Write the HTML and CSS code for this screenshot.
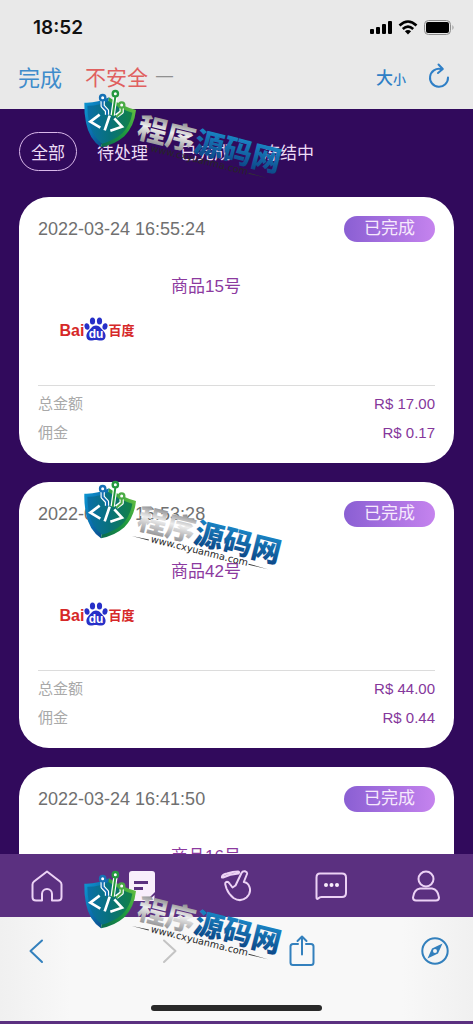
FILE: index.html
```html
<!DOCTYPE html>
<html lang="zh">
<head>
    <meta charset="UTF-8">
    <meta name="viewport" content="width=device-width, initial-scale=1.0">
    <title>订单记录</title>
    <link rel="stylesheet" href="styles.css">
</head>
<body>
    <!-- 公用图形 -->
    <svg class="defs" aria-hidden="true">
        <defs>
            <linearGradient id="shield-left" x1="0" y1="0" x2="1" y2="1">
                <stop offset="0" stop-color="#0d9bd6"/>
                <stop offset="0.5" stop-color="#0b6fae"/>
                <stop offset="1" stop-color="#0c3f80"/>
            </linearGradient>
            <linearGradient id="shield-right" x1="1" y1="0" x2="0" y2="1">
                <stop offset="0" stop-color="#7ac943"/>
                <stop offset="0.5" stop-color="#1f9a3f"/>
                <stop offset="1" stop-color="#0a6a50"/>
            </linearGradient>
            <linearGradient id="shield-core" x1="0" y1="0" x2="1" y2="0">
                <stop offset="0" stop-color="#0a6fa8"/>
                <stop offset="0.5" stop-color="#08717a"/>
                <stop offset="1" stop-color="#128246"/>
            </linearGradient>
            <linearGradient id="silver" x1="0" y1="0" x2="0" y2="1">
                <stop offset="0.2" stop-color="#8c8c8e"/>
                <stop offset="0.5" stop-color="#ededed"/>
                <stop offset="0.9" stop-color="#8f8f92"/>
            </linearGradient>
            <linearGradient id="blue" x1="0" y1="0" x2="0" y2="1">
                <stop offset="0.2" stop-color="#1a86c6"/>
                <stop offset="0.9" stop-color="#0c4686"/>
            </linearGradient>
        </defs>
        <symbol id="brand" viewBox="0 0 645 300">
            <path d="M28 56 Q66 58 102 40 L78 190 Q42 164 33 116 Q27 86 28 56Z" fill="url(#shield-left)"/>
            <path d="M102 40 Q142 68 183 78 Q178 126 148 157 Q120 182 78 190Z" fill="url(#shield-right)"/>
            <path d="M37 65 Q70 66 101 51 Q136 76 172 86 Q166 122 142 148 Q118 170 81 179 Q50 156 42 114 Q37 88 37 65Z" fill="url(#shield-core)"/>
            <g fill="none" stroke-width="6" stroke-linejoin="round">
                <path d="M83 46 V66 L96 80 V92 M121 38 L113 94 M140 68 V84 L124 96" stroke="#fff" stroke-width="13"/>
                <path d="M83 46 V66 L96 80 V94" stroke="#1670b4"/>
                <path d="M121 38 L113 96" stroke="#24983f"/>
                <path d="M140 68 V84 L124 98" stroke="#4bab45"/>
                <circle cx="83" cy="41" r="8" fill="#fff" stroke="#1670b4" stroke-width="7"/>
                <circle cx="121" cy="29" r="8" fill="#fff" stroke="#24983f" stroke-width="7"/>
                <circle cx="140" cy="63" r="8" fill="#fff" stroke="#4bab45" stroke-width="7"/>
                <path d="M74 92 L46 113 L76 131 M104 95 L89 139 M118 103 L141 128 L106 140" stroke="#fff" stroke-width="8" stroke-linejoin="miter"/>
            </g>
            <g transform="translate(182 159) rotate(14)">
                <text class="brand-name" x="0" y="0" fill="url(#silver)">程序</text>
                <text class="brand-name" x="176" y="0" fill="url(#blue)">源码网</text>
            </g>
            <g transform="translate(226 201) rotate(14)">
                <text class="brand-url" x="0" y="0">www.cxyuanma.com</text>
                <path d="M-58 -4 L-6 -6 V-3Z M302 -8 L362 -6 L302 -5Z" fill="#333"/>
            </g>
        </symbol>
        <symbol id="baidu-paw" viewBox="0 0 24 24">
            <g fill="#2730c8">
                <ellipse cx="3" cy="9.5" rx="2.5" ry="3.3" transform="rotate(-12 3 9.5)"/>
                <ellipse cx="8.5" cy="4" rx="2.6" ry="3.5"/>
                <ellipse cx="15.5" cy="4" rx="2.6" ry="3.5"/>
                <ellipse cx="21" cy="9.5" rx="2.5" ry="3.3" transform="rotate(12 21 9.5)"/>
                <path d="M12 8.5 C15.5 8.5 17 11.5 19.5 14 C23 17.5 22 23.5 17.5 23.5 C14 23.5 13 23 12 23 C10 23 9 23.500 6.5 23.5 C2 23.5 1 17.5 4.5 14 C7 11.5 8.5 8.5 12 8.5Z"/>
            </g>
            <text class="paw-text" x="12" y="21" text-anchor="middle">du</text>
        </symbol>
    </svg>

    <header class="browser-top">
        <div class="status-bar">
            <span class="time">18:52</span>
            <div class="status-icons">
                <svg width="22" height="14" viewBox="0 0 22 14"><g fill="#000"><rect x="0" y="9" width="4" height="5" rx="1"/><rect x="6" y="7" width="4" height="7" rx="1"/><rect x="12" y="4" width="4" height="10" rx="1"/><rect x="18" y="1" width="4" height="13" rx="1"/></g></svg>
                <svg width="20" height="15" viewBox="0 0 20 15"><g fill="none" stroke="#000" stroke-width="2.6"><path d="M1.5 5.5 Q10 -2.5 18.5 5.5"/><path d="M4.8 9 Q10 4.3 15.2 9"/></g><path d="M10 14.5 L6.9 11.3 Q10 8.8 13.1 11.3Z"/></svg>
                <svg width="31" height="15" viewBox="0 0 31 15"><rect x="0.5" y="0.5" width="26" height="14" rx="4" fill="none" stroke="#8c8c8c"/><rect x="2" y="2" width="23" height="11" rx="2"/><path d="M28.5 5 Q30.5 7.5 28.5 10Z" fill="#8c8c8c"/></svg>
            </div>
        </div>
        <div class="address-bar">
            <button type="button" class="done">完成</button>
            <span class="unsafe">不安全</span>
            <span class="dash">—</span>
            <button type="button" class="text-size" aria-label="大小"><span>大</span><small>小</small></button>
            <button type="button" aria-label="刷新">
                <svg width="22" height="26" viewBox="0 0 22 26"><g fill="none" stroke="#2f7fc6" stroke-width="2" stroke-linecap="round" stroke-linejoin="round"><path d="M20 14.5 A9 9 0 1 1 13 6"/><path d="M10.5 1.5 L14.8 6 L10 10"/></g></svg>
            </button>
        </div>
    </header>

    <main class="page">
        <nav class="filters">
            <button type="button" class="active">全部</button>
            <button type="button">待处理</button>
            <button type="button">已完成</button>
            <button type="button">冻结中</button>
        </nav>

        <article class="order">
            <div class="order-head">
                <time>2022-03-24 16:55:24</time>
                <span class="badge">已完成</span>
            </div>
            <div class="order-body">
                <div class="logo"><b>Bai</b><svg width="24" height="24"><use href="#baidu-paw"/></svg><b class="cn">百度</b></div>
                <h2>商品15号</h2>
            </div>
            <dl>
                <div><dt>总金额</dt><dd>R$ 17.00</dd></div>
                <div><dt>佣金</dt><dd>R$ 0.17</dd></div>
            </dl>
        </article>

        <article class="order">
            <div class="order-head">
                <time>2022-03-24 16:53:28</time>
                <span class="badge">已完成</span>
            </div>
            <div class="order-body">
                <div class="logo"><b>Bai</b><svg width="24" height="24"><use href="#baidu-paw"/></svg><b class="cn">百度</b></div>
                <h2>商品42号</h2>
            </div>
            <dl>
                <div><dt>总金额</dt><dd>R$ 44.00</dd></div>
                <div><dt>佣金</dt><dd>R$ 0.44</dd></div>
            </dl>
        </article>

        <article class="order">
            <div class="order-head">
                <time>2022-03-24 16:41:50</time>
                <span class="badge">已完成</span>
            </div>
            <div class="order-body">
                <h2>商品16号</h2>
            </div>
        </article>
    </main>

    <!-- 底部导航 -->
    <nav class="tabs">
        <a href="#home" aria-label="首页">
            <svg width="32" height="32" viewBox="0 0 32 32"><path d="M16 1.5 L29 11.5 Q30.5 12.7 30.5 14.5 V27 Q30.5 30.5 27 30.5 H21 V24 A5 5 0 0 0 11 24 V30.5 H5 Q1.5 30.5 1.5 27 V14.5 Q1.5 12.7 3 11.5Z"/></svg>
        </a>
        <a href="#orders" aria-label="订单">
            <svg width="32" height="32" viewBox="0 0 32 32"><path class="solid" d="M6 1 H26 Q29 1 29 4 V22 L20 31 H6 Q3 31 3 28 V4 Q3 1 6 1Z"/><path class="cut" d="M8 12.5 H22 M8 18.5 H17"/><path class="solid" d="M28.5 25 V31 H22Z"/></svg>
        </a>
        <a href="#grab" aria-label="抢单">
            <svg width="32" height="32" viewBox="0 0 32 32"><path d="M2 6.5 Q3 4.3 7 3.5 Q13 1.5 18 1.5 Q20 2 18.5 3.5 Q10 4 3 7.5 Q1.5 8 2 6.5Z"/><path d="M21.5 3 Q22.5 1 25 1.3 Q27.5 2 27 4 L23.8 12 Q28 12.5 29.5 17 Q31.5 23 26.5 27.5 Q20.5 32.5 13.5 28 Q8.5 24 6.5 18.5 L5.3 14.5 Q5 12 7 11.8 Q8.5 11.8 9.5 13.5 L12.5 17.5 L15.5 15.5Z"/></svg>
        </a>
        <a href="#chat" aria-label="客服">
            <svg width="32" height="32" viewBox="0 0 32 32"><path d="M5 3.5 H27 Q31 3.5 31 7.5 V23 Q31 27 27 27 H6.5 Q4.5 27 3.2 28.5 Q1.5 30 1.5 27 V7.5 Q1.5 3.5 5 3.5Z"/><g class="dots"><circle cx="11" cy="15" r="2"/><circle cx="16.5" cy="15" r="2"/><circle cx="22" cy="15" r="2"/></g></svg>
        </a>
        <a href="#mine" aria-label="我的">
            <svg width="32" height="32" viewBox="0 0 32 32"><circle cx="16" cy="9" r="7.5"/><path d="M10 18.5 H22 Q28 19.5 29 27.5 Q29 30.5 26 30.5 H6 Q3 30.5 3 27.5 Q4 19.5 10 18.5Z"/></svg>
        </a>
    </nav>

    <footer class="browser-bottom">
        <div class="toolbar">
            <button type="button" aria-label="后退"><svg width="32" height="32" viewBox="0 0 32 32"><path d="M22 5.5 L10.5 16 L22 27"/></svg></button>
            <button type="button" class="muted" aria-label="前进" disabled><svg width="32" height="32" viewBox="0 0 32 32"><path d="M11 5.5 L22.5 16 L11 27"/></svg></button>
            <button type="button" aria-label="分享"><svg width="32" height="32" viewBox="0 0 32 32"><path d="M12 9 H7 Q4.500 9 4.5 11.5 V27.5 Q4.5 30 7 30 H25 Q27.5 30 27.5 27.5 V11.5 Q27.5 9 25 9 H20 M16 19.5 V1.5 M11.5 6 L16 1.5 L20.5 6"/></svg></button>
            <button type="button" aria-label="浏览器"><svg width="32" height="32" viewBox="0 0 32 32"><circle cx="16" cy="16" r="12.7"/><path class="needle" fill-rule="evenodd" d="M23.5 8.5 L19 18.5 L8.5 23.5 L13 13.5Z M16 14 A2 2 0 1 0 16 18 A2 2 0 1 0 16 14Z"/></svg></button>
        </div>
        <div class="home-indicator"></div>
    </footer>

    <svg class="watermark watermark-top" aria-hidden="true"><use href="#brand"/></svg>
    <svg class="watermark watermark-middle" aria-hidden="true"><use href="#brand"/></svg>
    <svg class="watermark watermark-bottom" aria-hidden="true"><use href="#brand"/></svg>
</body>
</html>
```

FILE: styles.css
```css
* {
    box-sizing: border-box;
}
body {
    position: relative;
    display: flex;
    flex-direction: column;
    height: 100vh;
    margin: 0;
    overflow: hidden;
    font-family: "Liberation Sans", "Noto Sans CJK SC", sans-serif;
    background: #310a5c;
}
button {
    padding: 0;
    border: none;
    background: none;
    font-family: inherit;
    cursor: pointer;
}
svg {
    display: block;
}
.defs {
    position: absolute;
    width: 0;
    height: 0;
}

/* 浏览器顶部 */
.browser-top {
    flex: none;
    background: #e9e9e9;
}
.status-bar {
    display: flex;
    justify-content: space-between;
    align-items: center;
    height: 48px;
    padding: 6px 18px 0 33px;
}
.time {
    font-family: Inter, sans-serif;
    font-size: 19px;
    font-weight: 600;
    color: #111;
}
.status-icons {
    display: flex;
    align-items: center;
    gap: 6px;
}
.address-bar {
    display: flex;
    align-items: center;
    height: 61px;
    padding: 0 23px 5px 18px;
}
.done {
    margin-right: 23px;
    font-size: 22px;
    color: #3f8ccb;
}
.unsafe {
    margin-right: 8px;
    font-size: 21px;
    color: #e0605f;
}
.dash {
    font-size: 17px;
    color: #909090;
}
.text-size {
    display: flex;
    align-items: baseline;
    margin: 0 22px 0 auto;
    font-size: 17px;
    font-weight: 500;
    color: #2f7fc6;
}
.text-size small {
    font-size: 13px;
}

/* 订单列表 */
.page {
    flex: 1;
    min-height: 0;
    padding: 23px 19px 0;
    overflow: hidden;
}
.filters {
    display: flex;
    gap: 8px;
    margin-bottom: 26px;
}
.filters button {
    height: 39px;
    padding: 0 11px;
    border: 1px solid transparent;
    border-radius: 20px;
    font-size: 17px;
    color: #ecdcf5;
}
.filters .active {
    border-color: #d9b8ea;
}
.order {
    margin-bottom: 19px;
    padding: 19px 19px 16px;
    border-radius: 30px;
    background: #fff;
}
.order-head {
    display: flex;
    justify-content: space-between;
    align-items: center;
}
.order-head time {
    font-size: 18px;
    color: #707070;
}
.badge {
    width: 91px;
    border-radius: 13px;
    background: linear-gradient(90deg, #8a5fd3, #c583ee);
    font-size: 17px;
    line-height: 26px;
    text-align: center;
    color: #f6e9fc;
}
.order-body {
    display: grid;
    grid-template-columns: 118px 1fr;
    column-gap: 15px;
    height: 143px;
    padding-top: 32px;
}
.order-body h2 {
    grid-column: 2;
    grid-row: 1;
    margin: 0;
    font-size: 17px;
    font-weight: normal;
    line-height: 26px;
    color: #8c3a9f;
}
.logo {
    display: flex;
    justify-content: center;
    align-items: flex-end;
    height: 67px;
    color: #d62828;
    font-size: 16px;
    line-height: 20px;
}
.logo .cn {
    font-size: 13px;
}
.paw-text {
    font: bold 12px "Liberation Sans", sans-serif;
    fill: #fff;
}
.order dl {
    margin: 0;
    padding-top: 3px;
    border-top: 1px solid #dcdcdc;
}
.order dl div {
    display: flex;
    justify-content: space-between;
    font-size: 15px;
    line-height: 29px;
}
.order dt {
    color: #a9a9a9;
}
.order dd {
    margin: 0;
    color: #85379b;
}

/* 底部导航 */
.tabs {
    display: flex;
    flex: none;
    justify-content: space-around;
    align-items: center;
    height: 63px;
    background: #5b3080;
}
.tabs svg {
    fill: none;
    stroke: #ecd2f5;
    stroke-width: 2;
    stroke-linejoin: round;
}
.tabs .solid {
    fill: #f8eefb;
    stroke: none;
}
.tabs .cut {
    stroke: #5b3080;
    stroke-width: 3;
}
.tabs .dots {
    fill: #f8eefb;
    stroke: none;
}

/* 浏览器底部 */
.browser-bottom {
    flex: none;
    border-bottom: 3px solid #5b3080;
    background: linear-gradient(90deg, #f0f0f0, #f8f8f8 15%, #f8f8f8 85%, #f0f0f0);
}
.toolbar {
    display: flex;
    justify-content: space-between;
    padding: 18px 22px 0 20px;
}
.toolbar svg {
    fill: none;
    stroke: #3380bd;
    stroke-width: 2;
    stroke-linecap: round;
    stroke-linejoin: round;
}
.toolbar .muted svg {
    stroke: #c4c4c4;
}
.toolbar .needle {
    fill: #3380bd;
    stroke: none;
}
.home-indicator {
    width: 36%;
    height: 6px;
    margin: 38px auto 10px;
    border-radius: 3px;
    background: #292929;
}

/* 水印 */
.watermark {
    position: absolute;
    left: 75px;
    width: 215px;
    height: 100px;
    pointer-events: none;
}
.watermark-top {
    top: 84px;
}
.watermark-middle {
    top: 475px;
}
.watermark-bottom {
    top: 865px;
}
.brand-name {
    font: 900 88px "Noto Sans CJK SC", sans-serif;
}
.brand-url {
    font: 29px "DejaVu Sans", sans-serif;
    fill: #262626;
}
```
